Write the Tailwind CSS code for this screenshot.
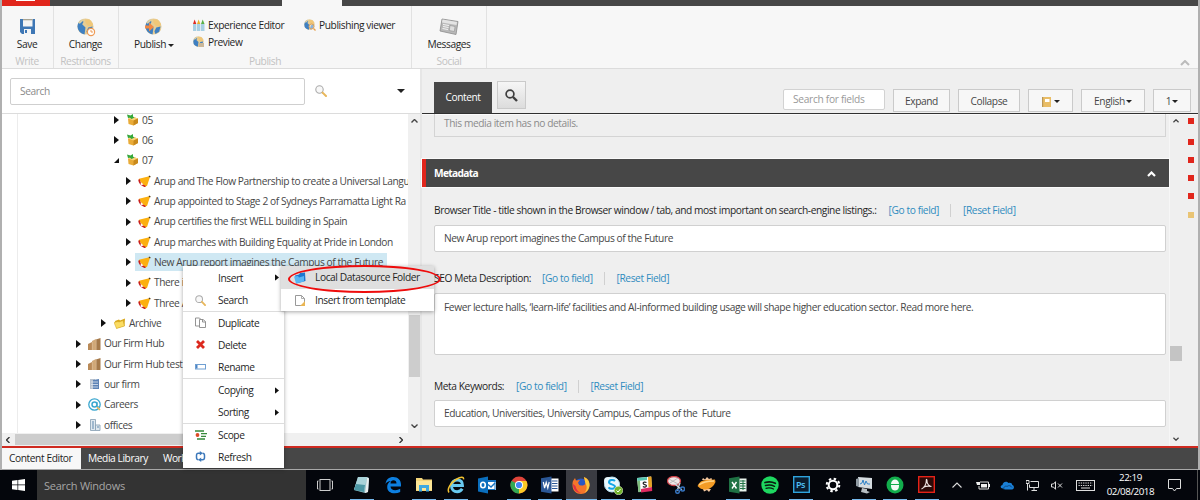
<!DOCTYPE html>
<html lang="en">
<head>
<meta charset="utf-8">
<title>Content Editor</title>
<script src="https://cdn.jsdelivr.net/npm/@tailwindcss/browser@4"></script>
</head>
<body class="w-[1200px] h-[500px] overflow-hidden bg-white">
<svg class="hidden">
  <symbol id="tri" viewBox="0 0 5 8"><path d="M0 0L5 4L0 8Z" fill="#111"/></symbol>
  <symbol id="caret" viewBox="0 0 8 4"><path d="M0 0H8L4 4Z" fill="#222"/></symbol>
  <symbol id="globe" viewBox="0 0 18 18"><circle cx="9" cy="9" r="8.500" fill="#e6cd96"/><path d="M.5 9A8.500 8.500 0 0 1 4 2.500L7 4 5.500 6.500 9 10l-1 7.400A8.500 8.500 0 0 1 .5 9z" fill="#3f80c2"/><path d="M8.500 1.500l5 0 3.500 5-2 3-4-1.500-2-3z" fill="#f0c778"/><path d="M12 10l4.500-1-1.500 5.500-4 2.500-1-3z" fill="#3f80c2"/><path d="M1 5l2.500-3L7 1 5.500 4 3 6z" fill="#d9cfa9"/></symbol>
  <symbol id="mag" viewBox="0 0 12 12"><circle cx="4.500" cy="4.500" r="3.700" fill="#f8f8f8" stroke="#aaa" stroke-width="1.100"/><path d="M7.600 7.600L11 11" stroke="#e8b75c" stroke-width="2" stroke-linecap="round"/></symbol>
  <symbol id="box" viewBox="0 0 12 12"><path d="M1 4.500L6.500 3 11 4.500V9L6.500 11.500 1.500 10z" fill="#e9ab38"/><path d="M1 4.500L6.500 6.500 11 4.500 6.500 3z" fill="#f7d27c"/><path d="M6.500 6.500L11 4.500V9L6.500 11.500z" fill="#c98a1c"/><path d="M0 .5l3.500 1L6 0v2.500l1.500 1-3 1.500L3 3.800 1 4z" fill="#35a83a"/></symbol>
  <symbol id="horn" viewBox="0 0 13 12"><path d="M12.300 1L9 11 6.500 11.500 .8 5.500 1 3.800z" fill="#fcb010"/><path d="M1.200 5.200Q1.500 9.500 6.800 11.200" stroke="#c81e1e" stroke-width="1.700" stroke-linecap="round" fill="#fff"/><path d="M2.800 8.300L4.500 9.900" stroke="#fff" stroke-width="1.600"/><path d="M11 .5l1.600.8-.5 1.300-1.400-.8z" fill="#4d3b22"/></symbol>
  <symbol id="bld" viewBox="0 0 13 12"><path d="M0 6L4 4V12H0z" fill="#b98a58"/><path d="M4 3L8 1V12H4z" fill="#d0a878"/><path d="M8 1.500L12.500 0V12H8z" fill="#a57a4b"/><path d="M4.300 4v8M8.300 2v10" stroke="#e5cba8" stroke-width=".5"/></symbol>
  <symbol id="fold" viewBox="0 0 12 11"><path d="M1 3L5 1.500 6 2.500 11 .5 10.500 8 2.500 10.500z" fill="#d9a719"/><path d="M0 4.500L4 3.500 5 4 9 2.500 10.500 8 2.500 10.500z" fill="#fbdc62" stroke="#cda01f" stroke-width=".5"/></symbol>
</svg>
<div class="relative flex h-[500px] w-[1200px] flex-col bg-[#efefef] font-['Open_Sans',sans-serif] text-[10.2px] leading-none tracking-[-0.41px] text-[#1f1f1f]">

  <!-- application window -->
  <div class="flex h-[470px] flex-col border-r-2 border-l-2 border-[#b0b0b0]">
    <!-- top strip -->
    <div class="flex h-[6px] shrink-0 bg-[#f7f7f7]">
      <div class="flex w-[48px] justify-center bg-[#e1261c] pr-0.5"><div class="h-[1px] w-[19px] bg-white"></div></div>
      <div class="w-[232px] bg-[#474747]"></div>
      <div class="w-[60px]"></div>
      <div class="flex-1 bg-[#474747]"></div>
    </div>

    <!-- ribbon -->
    <div class="flex h-[63px] shrink-0 border-b border-[#dcdcdc] bg-[#f7f7f7]">
      <div class="flex w-[52px] flex-col items-center border-r border-[#e2e2e2] pt-[13px] pr-px">
        <svg class="h-[15px] w-[15px]" viewBox="0 0 15 15"><path d="M0 0H15V15H2L0 13z" fill="#3e77b5"/><rect x="3" y="0" width="9.500" height="7.500" fill="#f4f4f4"/><rect x="3" y="0" width="9.500" height="1.300" fill="#a8a391"/><rect x="4" y="10" width="7" height="5" fill="#f4f4f4"/><rect x="5" y="11" width="2" height="3" fill="#3e77b5"/></svg>
        <span class="mt-[5px]">Save</span><span class="mt-[7px] text-[#c2c2c2]">Write</span>
      </div>
      <div class="flex w-[65px] flex-col items-center border-r border-[#e2e2e2] pt-[12px] pr-px">
        <svg class="h-[18px] w-[18px] overflow-visible" viewBox="0 0 18 18"><use href="#globe" width="17" height="17"/><circle cx="14" cy="14" r="3.600" fill="#fff" stroke="#ee9a55" stroke-width="1.200"/><path d="M14 12v2h2" stroke="#ee9a55" fill="none"/></svg>
        <span class="mt-[3px]">Change</span><span class="mt-[7px] text-[#c2c2c2]">Restrictions</span>
      </div>
      <div class="flex w-[293px] flex-col border-r border-[#e2e2e2]">
        <div class="flex h-[50px]">
          <div class="flex w-[69px] flex-col items-center pt-[12px]">
            <svg class="h-[18px] w-[18px]" viewBox="0 0 18 18"><use href="#globe" width="17" height="17"/><path d="M0 7.500h4V4.500l5 4.500-5 4.500v-3H0z" fill="#f08a45"/></svg>
            <span class="mt-[3px] flex items-center gap-[2px] pl-px">Publish<svg class="mt-[2px] h-[3px] w-[6px]"><use href="#caret" width="6" height="3"/></svg></span>
          </div>
          <div class="flex w-[112px] flex-col gap-[5px] pt-[13px] pl-[5px]">
            <div class="flex h-3 items-center gap-[3px] whitespace-nowrap"><svg class="h-3 w-3" viewBox="0 0 12 12"><path d="M0 5h3.300v7H0zM4 5h3.300v7H4zM8 5h3.500v7H8z" fill="#a7cfe3"/><path d="M0 5l1.600-4.500L3.300 5z" fill="#e02a20"/><path d="M4 5l1.600-4.500L7.300 5z" fill="#e8b02a"/><path d="M8 5l1.700-4.500L11.500 5z" fill="#58b047"/></svg>Experience Editor</div>
            <div class="flex h-3 items-center gap-[3px]"><svg class="h-3 w-3" viewBox="0 0 12 12"><use href="#globe" width="11" height="11"/><path d="M5.500 7h5.500V11H5.500z" fill="#cbb899"/></svg>Preview</div>
          </div>
          <div class="mt-[13px] flex h-3 items-center gap-[3px] pl-[4px] whitespace-nowrap"><svg class="h-3 w-3" viewBox="0 0 12 12"><use href="#globe" width="11" height="11"/><circle cx="7.500" cy="7.500" r="2.500" fill="#fff6" stroke="#d9a05c"/><path d="M9.500 9.500l2 2" stroke="#e8a04a" stroke-width="1.300"/></svg>Publishing viewer</div>
        </div>
        <span class="text-center text-[#c2c2c2]">Publish</span>
      </div>
      <div class="flex w-[75px] flex-col items-center border-r border-[#e2e2e2] pt-[12px]">
        <svg class="h-[18px] w-[20px]" viewBox="0 0 20 18"><path d="M3 1L19 3.500 17 16.500 1 13z" fill="#b9b9b9" stroke="#8b8b8b" stroke-width=".8"/><path d="M3.500 1.500L18 4 17.500 7 3 4.500z" fill="#e4e4e4"/><path d="M4 6.500L10 7.500M4 8.500l5.500 1M3.500 10.500l5.500 1" stroke="#f4f4f4"/><path d="M11 7.500l5 1-.7 5-5-1z" fill="#dedede" stroke="#888" stroke-width=".5"/></svg>
        <span class="mt-[3px]">Messages</span><span class="mt-[7px] text-[#c2c2c2]">Social</span>
      </div>
      <div class="flex flex-1 items-end justify-end pr-[8px] pb-[2px]"><svg class="h-[6px] w-[10px]" viewBox="0 0 10 6" fill="none"><path d="M1 5l4-4 4 4" stroke="#bbb" stroke-width="2"/></svg></div>
    </div>

    <!-- body -->
    <div class="flex h-[377px] shrink-0">
      <!-- content tree -->
      <div class="flex w-[418px] flex-col bg-white">
        <div class="flex h-[45px] items-start border-b border-[#dcdcdc] pt-[9px] pl-[8px]">
          <div class="flex h-[27px] w-[295px] items-center rounded-[2px] border border-[#cfcfcf] pl-[9px] text-[#8a8a8a]">Search</div>
          <svg class="mt-[7px] ml-[10px] h-3 w-3"><use href="#mag"/></svg>
          <svg class="mt-[11px] ml-[70px] h-1 w-2"><use href="#caret"/></svg>
        </div>
        <div class="flex h-[319px]">
          <div class="w-[16px] shrink-0 border-r border-[#ececec]"></div>
          <div class="w-[390px] overflow-hidden text-[#474747]">
            <div class="-mt-[4.400px] flex w-max flex-col whitespace-nowrap *:flex *:h-[20.35px] *:shrink-0 *:items-center">
              <div class="pl-[96px]"><svg class="mr-[8px] h-2 w-[5px] shrink-0"><use href="#tri"/></svg><svg class="mr-[3px] h-3 w-[12px] shrink-0"><use href="#box"/></svg>05</div>
              <div class="pl-[96px]"><svg class="mr-[8px] h-2 w-[5px] shrink-0"><use href="#tri"/></svg><svg class="mr-[3px] h-3 w-[12px] shrink-0"><use href="#box"/></svg>06</div>
              <div class="pl-[96px]"><svg class="mr-[8px] h-[5px] w-[5px] shrink-0" viewBox="0 0 5 5"><path d="M5 0V5H0z" fill="#111"/></svg><svg class="mr-[3px] h-3 w-[12px] shrink-0"><use href="#box"/></svg>07</div>
              <div class="pl-[108px]"><svg class="mr-[7px] h-2 w-[5px] shrink-0"><use href="#tri"/></svg><svg class="mr-[3px] h-3 w-[13px] shrink-0"><use href="#horn"/></svg>Arup and The Flow Partnership to create a Universal Langu</div>
              <div class="pl-[108px]"><svg class="mr-[7px] h-2 w-[5px] shrink-0"><use href="#tri"/></svg><svg class="mr-[3px] h-3 w-[13px] shrink-0"><use href="#horn"/></svg>Arup appointed to Stage 2 of Sydneys Parramatta Light Ra</div>
              <div class="pl-[108px]"><svg class="mr-[7px] h-2 w-[5px] shrink-0"><use href="#tri"/></svg><svg class="mr-[3px] h-3 w-[13px] shrink-0"><use href="#horn"/></svg>Arup certifies the first WELL building in Spain</div>
              <div class="pl-[108px]"><svg class="mr-[7px] h-2 w-[5px] shrink-0"><use href="#tri"/></svg><svg class="mr-[3px] h-3 w-[13px] shrink-0"><use href="#horn"/></svg>Arup marches with Building Equality at Pride in London</div>
              <div class="pl-[108px]"><svg class="mr-[4px] h-2 w-[5px] shrink-0"><use href="#tri"/></svg><div class="flex h-[18px] w-[252px] items-center bg-[#cfe8f3] pl-[3px]"><svg class="mr-[3px] h-3 w-[13px] shrink-0"><use href="#horn"/></svg>New Arup report imagines the Campus of the Future</div></div>
              <div class="pl-[108px]"><svg class="mr-[7px] h-2 w-[5px] shrink-0"><use href="#tri"/></svg><svg class="mr-[3px] h-3 w-[13px] shrink-0"><use href="#horn"/></svg>There is</div>
              <div class="pl-[108px]"><svg class="mr-[7px] h-2 w-[5px] shrink-0"><use href="#tri"/></svg><svg class="mr-[3px] h-3 w-[13px] shrink-0"><use href="#horn"/></svg>Three A</div>
              <div class="pl-[83px]"><svg class="mr-[8px] h-2 w-[5px] shrink-0"><use href="#tri"/></svg><svg class="mr-[3px] h-[11px] w-[12px] shrink-0"><use href="#fold"/></svg>Archive</div>
              <div class="pl-[58px]"><svg class="mr-[7px] h-2 w-[5px] shrink-0"><use href="#tri"/></svg><svg class="mr-[3px] h-3 w-[13px] shrink-0"><use href="#bld"/></svg>Our Firm Hub</div>
              <div class="pl-[58px]"><svg class="mr-[7px] h-2 w-[5px] shrink-0"><use href="#tri"/></svg><svg class="mr-[3px] h-3 w-[13px] shrink-0"><use href="#bld"/></svg>Our Firm Hub test</div>
              <div class="pl-[58px]"><svg class="mr-[7px] h-2 w-[5px] shrink-0"><use href="#tri"/></svg><svg class="mr-[3px] h-3 w-[13px] shrink-0" viewBox="0 0 13 12"><path d="M2 1h5v10H2z" fill="#b9c3cf"/><path d="M5 2l6-1v10H5z" fill="#5c82b5"/><path d="M3 4h7M3 6.500h7M3 9h7" stroke="#dfe8f2" stroke-width=".8"/></svg>our firm</div>
              <div class="pl-[58px]"><svg class="mr-[7px] h-2 w-[5px] shrink-0"><use href="#tri"/></svg><svg class="mr-[3px] h-[13px] w-[13px] shrink-0" viewBox="0 0 13 13" fill="none"><circle cx="6.500" cy="6.500" r="5.700" stroke="#3ba7cf" stroke-width="1.300"/><circle cx="6.500" cy="6.500" r="2.500" stroke="#3ba7cf" stroke-width="1.500"/><path d="M9 4v4q1 2 2.500 0" stroke="#3ba7cf"/><path d="M9 9l3 3" stroke="#e8b75c" stroke-width="1.600"/></svg>Careers</div>
              <div class="pl-[58px]"><svg class="mr-[7px] h-2 w-[5px] shrink-0"><use href="#tri"/></svg><svg class="mr-[3px] h-3 w-[13px] shrink-0" viewBox="0 0 13 12"><path d="M2.500.5h5v11h-5zM7.500 6h4.500v5.500H7.500z" fill="#dfe8ef" stroke="#8fa6b8" stroke-width=".9"/><path d="M4 3h2M4 5h2M4 7h2M4 9h2M9 8h2" stroke="#5f88ad"/></svg>offices</div>
            </div>
          </div>
          <div class="flex w-[12px] flex-col items-center justify-between bg-[#f0f0f0] py-[5px]">
            <svg class="h-[4px] w-[7px]" viewBox="0 0 7 4" fill="none"><path d="M.5 3.500l3-3 3 3" stroke="#444" stroke-width="1.400"/></svg>
            <div class="mt-[144px] h-[62px] w-[11px] bg-[#cdcdcd]"></div>
            <svg class="h-[4px] w-[7px]" viewBox="0 0 7 4" fill="none"><path d="M.5.5l3 3 3-3" stroke="#444" stroke-width="1.400"/></svg>
          </div>
        </div>
        <div class="flex h-[13px] items-center bg-[#f0f0f0]">
          <svg class="ml-[4px] h-[6px] w-[4px]" viewBox="0 0 4 6" fill="none"><path d="M3.500 0l-3 3 3 3" stroke="#333" stroke-width="1.300"/></svg>
          <div class="ml-[5px] h-[11px] w-[230px] bg-[#cdcdcd]"></div>
          <svg class="ml-[154px] h-[6px] w-[4px]" viewBox="0 0 4 6" fill="none"><path d="M.5 0l3 3-3 3" stroke="#333" stroke-width="1.300"/></svg>
        </div>
      </div>

      <!-- field editor -->
      <div class="flex flex-1 flex-col border-l-2 border-[#e6e6e6] bg-[#efefef]">
        <div class="flex h-[45px] items-start border-b border-[#303030] pl-[12px] shadow-[0_1px_0_#fafafa]">
          <div class="mt-[13px] flex h-[31px] w-[58px] items-center justify-center bg-[#474747] text-white">Content</div>
          <div class="mt-[12px] ml-[5px] flex h-[28px] w-[29px] items-center justify-center border border-[#cacaca] bg-linear-to-b from-[#f6f6f6] to-[#dcdcdc]"><svg class="h-[13px] w-[13px]" viewBox="0 0 13 13" fill="none" stroke="#3f3f3f"><circle cx="5" cy="5" r="3.900" stroke-width="1.700"/><path d="M8 8l4 4" stroke-width="2.400"/></svg></div>
          <div class="mt-[20px] ml-[257px] flex h-[21px] w-[102px] items-center rounded-[2px] border border-[#d2d2d2] bg-white pl-[9px] tracking-[-0.3px] text-[#999]">Search for fields</div>
          <div class="mt-[20px] ml-[8px] flex h-[23px] gap-[8px] text-[#474747] *:flex *:items-center *:justify-center *:border *:border-[#cacaca] *:bg-[#f7f7f7] *:pt-px">
            <div class="w-[57px]">Expand</div>
            <div class="w-[62px]">Collapse</div>
            <div class="w-[45px] gap-[3px]"><svg class="mt-px h-[10px] w-[9px]" viewBox="0 0 9 10"><path d="M0 0h9v10H0z" fill="#e9bd66"/><path d="M0 0h1.200v10H0z" fill="#b99656"/><path d="M3 2h4.500v3H3z" fill="#fff"/></svg><svg class="h-[3px] w-[6px]"><use href="#caret" width="6" height="3"/></svg></div>
            <div class="w-[64px] gap-[1px]">English<svg class="h-[3px] w-[6px]"><use href="#caret" width="6" height="3"/></svg></div>
            <div class="w-[38px] gap-[1px]">1<svg class="h-[3px] w-[6px]"><use href="#caret" width="6" height="3"/></svg></div>
          </div>
        </div>
        <div class="flex h-[332px]">
          <div class="flex w-[748px] flex-col border-r border-[#f6f6f6]">
            <div class="ml-[12px] flex h-[23px] w-[732px] items-center border border-t-0 border-[#d4d4d4] pb-[3px] pl-[9px] text-[#8b8b8b]">This media item has no details.</div>
            <div class="mt-[22px] flex h-[28px] items-center justify-between border-l-4 border-[#e1261c] bg-[#474747] pt-px pr-[13px] pl-[8px] font-bold tracking-[-0.68px] text-white shadow-[0_0_0_1px_#fafafa]">Metadata<svg class="h-[6px] w-[9px]" viewBox="0 0 9 6" fill="none"><path d="M1 5l3.500-3.500L8 5" stroke="#fff" stroke-width="2.200"/></svg></div>
            <div class="mt-[17px] ml-[12px] flex h-[13px] w-[732px] items-center whitespace-nowrap">Browser Title - title shown in the Browser window / tab, and most important on search-engine listings.:<span class="ml-[12px] text-[#2f8cbf]">[Go to field]</span><span class="ml-[11px] h-[13px] w-px bg-[#d0d0d0]"></span><span class="ml-[12px] text-[#2f8cbf]">[Reset Field]</span></div>
            <div class="mt-[8px] ml-[12px] flex h-[27px] w-[732px] items-center rounded-[2px] border border-[#d0d0d0] bg-white pl-[9px] text-[#474747]">New Arup report imagines the Campus of the Future</div>
            <div class="mt-[20px] ml-[12px] flex h-[13px] items-center">SEO Meta Description:<span class="ml-[11px] text-[#2f8cbf]">[Go to field]</span><span class="ml-[11px] h-[13px] w-px bg-[#d0d0d0]"></span><span class="ml-[12px] text-[#2f8cbf]">[Reset Field]</span></div>
            <div class="mt-[8px] ml-[12px] h-[62px] w-[732px] rounded-[2px] border border-[#d0d0d0] bg-white pt-[8px] pl-[9px] text-[#474747]">Fewer lecture halls, ‘learn-life’ facilities and AI-informed building usage will shape higher education sector. Read more here.</div>
            <div class="mt-[25px] ml-[12px] flex h-[13px] items-center">Meta Keywords:<span class="ml-[12px] text-[#2f8cbf]">[Go to field]</span><span class="ml-[11px] h-[13px] w-px bg-[#d0d0d0]"></span><span class="ml-[12px] text-[#2f8cbf]">[Reset Field]</span></div>
            <div class="mt-[7px] ml-[12px] flex h-[27px] w-[732px] items-center rounded-[2px] border border-[#d0d0d0] bg-white pl-[9px] whitespace-pre text-[#474747]">Education, Universities, University Campus, Campus of the  Future</div>
          </div>
          <div class="flex w-[12px] flex-col items-center pt-[5px]">
            <svg class="h-[4px] w-[6px]" viewBox="0 0 7 4" fill="none"><path d="M.5 3.500l3-3 3 3" stroke="#444" stroke-width="1.400"/></svg>
            <div class="mt-[223px] h-[15px] w-[12px] bg-[#c4c4c4]"></div>
            <svg class="mt-[76px] h-[4px] w-[6px]" viewBox="0 0 7 4" fill="none"><path d="M.5.500l3 3 3-3" stroke="#444" stroke-width="1.400"/></svg>
          </div>
          <div class="flex flex-col pt-[4px] pl-[6px] *:h-[6px] *:w-[6px]">
            <div class="bg-[#e1261c]"></div>
            <div class="mt-[15px] bg-[#e1261c]"></div>
            <div class="mt-[12px] bg-[#e1261c]"></div>
            <div class="mt-[12px] bg-[#e1261c]"></div>
            <div class="mt-[12px] bg-[#e1261c]"></div>
            <div class="mt-[13px] bg-[#e9c474]"></div>
          </div>
        </div>
      </div>
    </div>

    <!-- editor tabs -->
    <div class="flex h-[24px] shrink-0 items-stretch border-t-2 border-b border-t-[#cf2a20] border-b-[#a8a8a8] bg-[#474747] text-white">
      <div class="flex w-[79px] items-center bg-[#f7f7f7] pl-[7px] text-[#1f1f1f]">Content Editor</div>
      <div class="flex items-center pl-[7px]">Media Library</div>
      <div class="flex items-center pl-[15px]">Workbox</div>
    </div>
  </div>

  <!-- taskbar -->
  <div class="flex h-[30px] items-stretch bg-[#04060c] text-white">
    <div class="flex w-[37px] items-center justify-center"><svg class="h-[12px] w-[13px]" viewBox="0 0 13 12"><path d="M0 1.700L5.500 1v4.600H0zM6.200.9L13 0v5.600H6.200zM0 6.300h5.500v4.600L0 10.200zM6.200 6.300H13V12l-6.800-.9z" fill="#fff"/></svg></div>
    <div class="flex w-[269px] items-center bg-[#333] pt-px pl-[7px] text-[11px] tracking-[-0.25px] text-[#a6a6a6]">Search Windows</div>
    <div class="flex w-[40px] items-center pl-[11px]"><svg class="h-[12px] w-[16px]" viewBox="0 0 16 12" fill="none" stroke="#ccc"><rect x="3" y=".5" width="10" height="11"/><path d="M1.500 2H.5v8h1M14.500 2h1v8h-1"/></svg></div>
    <div class="flex *:flex *:w-[31.4px] *:flex-col *:items-center *:justify-between *:pt-[6px]">
      <div><svg class="h-[18px] w-[18px]" viewBox="0 0 18 18"><path d="M5 1h9l2 1-1 14-3 1L1 14z" fill="#8fb9c2"/><path d="M5 1h9l-3 15L1 13.500z" fill="#a9d3da"/><path d="M3 8l9 1-1 7-10-2z" fill="#4c97a5"/><path d="M14 1.500l2 1-1 13.500-3 1z" fill="#e9eef0"/></svg><i class="h-[1px] w-[24px] bg-[#76b9ed]"></i></div>
      <div><svg class="h-[18px] w-[18px]" viewBox="0 0 18 18"><path d="M1.500 8C2 3.500 5 1 9.300 1 14 1 17 4.200 17 8.500V10.500H6.500c.2 2.600 2.200 3.700 4.700 3.700 2 0 3.500-.5 5-1.400v3.300c-1.700.8-3.500 1.200-5.500 1.200-4.500 0-7.500-2.300-7.500-6.300 0-2.700 1.300-4.700 3.800-6C4 5.200 2.500 6.300 1.500 8zM6.500 7.500h6C12.500 5.300 11.300 4.300 9.500 4.300S6.700 5.500 6.500 7.500z" fill="#0d7fe0"/></svg></div>
      <div><svg class="h-[18px] w-[18px]" viewBox="0 0 18 18"><path d="M1 2h6l1 1.500h9V15H1z" fill="#f5d67b"/><path d="M1 5h16v9H1z" fill="#fde697"/><path d="M4 9h10v6.500h-3V12H7v3.500H4z" fill="#3fa9e0"/></svg><i class="h-[1px] w-[24px] bg-[#76b9ed]"></i></div>
      <div><svg class="h-[18px] w-[18px]" viewBox="0 0 18 18" fill="none"><path d="M4.500 9.500H15.500C15.500 6 13.500 4 10.300 4S4.500 6.200 4.500 10c0 3.500 2.300 5.700 5.700 5.700 2.300 0 4-1 5-2.900" stroke="#68c9f0" stroke-width="2.900"/><path d="M2 16.500C-.5 13 4 6.500 9 3.500s8-3 7.500-.2" stroke="#f2c230" stroke-width="1.500"/></svg><i class="h-[1px] w-[24px] bg-[#76b9ed]"></i></div>
      <div><svg class="h-[18px] w-[18px]" viewBox="0 0 18 18"><path d="M8 4h10v10H8z" fill="#fff"/><path d="M8 4h10v2H8zM16.500 4h1v10H8v-1h8.500z" fill="#1474c4"/><path d="M10 8.500l3 2.500 4-4" stroke="#1474c4" stroke-width="1.400" fill="none"/><path d="M0 2.500L10 .5v17L0 15.500z" fill="#0a6ebd"/><ellipse cx="5" cy="9" rx="2.300" ry="2.800" fill="none" stroke="#fff" stroke-width="1.600"/></svg></div>
      <div><svg class="h-[18px] w-[18px]" viewBox="0 0 18 18"><circle cx="9" cy="9" r="8.500" fill="#e0443a"/><path d="M9 9L1.600 4.700A8.500 8.500 0 0 0 9 17.500l4-6.500z" fill="#33a852"/><path d="M9 9l0 8.500A8.500 8.500 0 0 0 16.400 5H9z" fill="#fbc926"/><circle cx="9" cy="9" r="4" fill="#fff"/><circle cx="9" cy="9" r="3.100" fill="#4285f4"/></svg><i class="h-[1px] w-[24px] bg-[#76b9ed]"></i></div>
      <div><svg class="h-[18px] w-[18px]" viewBox="0 0 18 18"><path d="M9 2.500h8.500v13H9z" fill="#fff"/><path d="M11 5h5.500M11 7.500h5.500M11 10h5.500M11 12.500h5.500" stroke="#2b5797"/><path d="M0 2.200L10.500.5v17L0 15.800z" fill="#2b5797"/><path d="M2.300 6l1.300 6L5.200 6.500 6.800 12 8.200 6" stroke="#fff" stroke-width="1.200" fill="none"/></svg><i class="h-[1px] w-[24px] bg-[#76b9ed]"></i></div>
      <div class="bg-[#3a3b42]"><svg class="h-[18px] w-[18px]" viewBox="0 0 18 18"><circle cx="9" cy="9.500" r="7" fill="#2b57c4"/><path d="M1 5L3 2l1 2.500L8 4 6 7l3 2c2 1 4 0 4.500-1.500L12 1c4 1.500 5.800 5 5.500 8.500C17 14.500 13.500 18 9 18S.5 14.500.5 9.500C.5 7.500.5 6.500 1 5z" fill="#f5752a"/><path d="M12 1c4 1.500 5.800 5 5.500 8.500-.2 3-2 6-5 7.500 3-4 2.500-7 1-9.500z" fill="#fdc83c"/><path d="M1 8c0 5 3 9 8 9-3-1-5-4-5.500-7z" fill="#e02f45"/><circle cx="9" cy="7" r="2.500" fill="#2b57c4"/></svg><i class="h-[1px] w-[31px] bg-[#76b9ed]"></i></div>
      <div><svg class="h-[19px] w-[20px]" viewBox="0 0 20 19"><circle cx="9" cy="8.500" r="7.500" fill="#e9f7fd" stroke="#b9e2f5"/><circle cx="5" cy="5" r="4" fill="#e9f7fd"/><path d="M12 5C10.500 3.500 6 3.700 6 6.300c0 2.400 6 1.700 6 4.400 0 2.600-5 2.600-6.500.6" fill="none" stroke="#12a5e6" stroke-width="2"/><circle cx="15.500" cy="14.500" r="4.300" fill="#73b42c" stroke="#e8f4dc" stroke-width=".6"/><path d="M13.500 14.500l1.500 1.500 2.500-3" stroke="#fff" fill="none"/></svg><i class="h-[1px] w-[24px] bg-[#76b9ed]"></i></div>
      <div><svg class="h-[17px] w-[17px]" viewBox="0 0 17 17"><path d="M1 2L15 .5 16 14 2.500 16z" fill="#fff"/><path d="M1 2L11 1v3L1.500 5z" fill="#57c5b0"/><path d="M12 1l3.500-.5L16 11l-3.500.5z" fill="#e6a323"/><path d="M5 13l11-2 .2 4L5 16.500z" fill="#e02a62"/><path d="M1.300 5L4 4.500 4.500 16l-2 .3z" fill="#7ebd7d"/><path d="M10.500 6.500C9 5.700 7 6 7.200 7.500c.2 1.300 3.200.8 3.200 2.300 0 1.500-2.300 1.700-3.500.7" fill="none" stroke="#222" stroke-width="1.300"/></svg><i class="h-[1px] w-[24px] bg-[#76b9ed]"></i></div>
      <div><svg class="h-[18px] w-[18px]" viewBox="0 0 18 18"><ellipse cx="7" cy="5" rx="6.500" ry="4.500" fill="#f0e6e6" stroke="#ce4047" stroke-width="1.300"/><path d="M2 3l9 5M3 7l8-5" stroke="#bbb"/><path d="M8 8l7 6M13 7l-3 8" stroke="#ccd5dd" stroke-width="1.300"/><circle cx="15.500" cy="13" r="2" fill="none" stroke="#3673bd" stroke-width="1.500"/><circle cx="10.500" cy="15.500" r="1.800" fill="none" stroke="#3673bd" stroke-width="1.500"/></svg></div>
      <div><svg class="h-[18px] w-[19px]" viewBox="0 0 19 18"><path d="M5 4l1-2 2 1.500L10 1l2 2 2.500-1 .5 2.500M6 13l1 2.500 3-1.500 2 2 2-3" fill="#f6c9a0"/><path d="M.5 10Q3 4 9 4L18 3.500 18.500 6Q16 12.500 9 13.500 4 14 .5 10z" fill="#f39b25"/><path d="M2 9q5-4 15-4" stroke="#ffd487" stroke-width="1.300" fill="none"/></svg></div>
      <div><svg class="h-[18px] w-[18px]" viewBox="0 0 18 18"><path d="M9 2.500h8.500v13H9z" fill="#e8f2ec"/><path d="M11 5h5.500M11 7.500h5.500M11 10h5.500M11 12.500h5.500M14 4v10" stroke="#217346"/><path d="M0 2.200L10.500.5v17L0 15.800z" fill="#1f7244"/><path d="M3 6l4.500 6.500M7.500 6L3 12.500" stroke="#fff" stroke-width="1.400"/></svg><i class="h-[1px] w-[24px] bg-[#76b9ed]"></i></div>
      <div><svg class="h-[18px] w-[18px]" viewBox="0 0 18 18" fill="none" stroke="#0a1c10" stroke-linecap="round"><circle cx="9" cy="9" r="8.700" fill="#1ed760" stroke="none"/><path d="M4 6.500q5.500-1.700 10.300.8" stroke-width="1.800"/><path d="M4.500 9.500q5-1.300 9 .8" stroke-width="1.500"/><path d="M5 12.300q4-1 7.500.7" stroke-width="1.200"/></svg></div>
      <div><svg class="h-[17px] w-[17px]" viewBox="0 0 17 17"><rect x=".7" y=".7" width="15.600" height="15.600" fill="#0a1d2e" stroke="#2fa3dd" stroke-width="1.400"/><text x="3" y="12" font-size="9" font-weight="600" fill="#4fc0f5">Ps</text></svg><i class="h-[1px] w-[24px] bg-[#76b9ed]"></i></div>
      <div><svg class="h-[18px] w-[16px]" viewBox="0 0 16 18" fill="none" stroke="#fff"><circle cx="8" cy="9" r="4.300" stroke-width="2"/><circle cx="8" cy="9" r="6.300" stroke-width="2" stroke-dasharray="2.470 2.470"/></svg></div>
      <div><svg class="h-[18px] w-[18px]" viewBox="0 0 18 18"><path d="M3 1l14 1v11l-14-2z" fill="#d4dbe0"/><path d="M1 3l3-1 0 9-3-1z" fill="#8f9aa2"/><path d="M5 8l2-1 1-3 1.500 5L11 5l1.500 3H15" stroke="#2e82c9" fill="none"/><path d="M7 12l5 1v2l3 1-3 1.500-6-1.500z" fill="#b8bec2"/></svg><i class="h-[1px] w-[24px] bg-[#76b9ed]"></i></div>
      <div><svg class="h-[18px] w-[18px]" viewBox="0 0 18 18"><circle cx="9" cy="9" r="8.500" fill="#12ad4c"/><path d="M5 8c0-6 8-6 8 0v2c0 6-8 6-8 0z" fill="#f3faf5"/><path d="M4 8.500h10" stroke="#12ad4c" stroke-width="1"/></svg><i class="h-[1px] w-[24px] bg-[#76b9ed]"></i></div>
      <div><svg class="h-[17px] w-[17px]" viewBox="0 0 17 17"><rect x=".7" y=".7" width="15.600" height="15.600" fill="#2b0a08" stroke="#e52217" stroke-width="1.400"/><path d="M3.500 13C6 12 8.500 8 8.300 4.500 8 3 9.300 3 9 5c-.3 2.500 2 5 4.500 5.500M5 11.500q4-2 8.500-1" stroke="#f0e4e2" fill="none" stroke-width="1.100"/></svg><i class="h-[1px] w-[24px] bg-[#76b9ed]"></i></div>
    </div>
    <div class="flex flex-1 items-center pl-[10px]">
      <svg class="h-[6px] w-[10px]" viewBox="0 0 10 6" fill="none"><path d="M.5 5.500L5 1l4.500 4.500" stroke="#ddd" stroke-width="1.100"/></svg>
      <svg class="ml-[14px] h-[10px] w-[14px]" viewBox="0 0 14 10"><path d="M4 2h8.500v7H3V6" fill="none" stroke="#ddd"/><path d="M5 4h6v3.500H5zM12.500 4H14v3h-1.500zM0 2h4v3H1z" fill="#eee"/></svg>
      <svg class="ml-[10px] h-[9px] w-[14px]" viewBox="0 0 14 9"><path d="M3 7.500C0 7.500 0 4.500 2.500 4 2.500 1 6.500-.5 8.500 2c2-1 4 .5 3.700 2 2.400.5 2.300 4-.2 4.500H5z" fill="#1a7fd6"/><path d="M4 8.500C3 6 5.500 4.500 7 5.500c1.500-1.500 4-1 5 1" fill="none" stroke="#0b4a86"/></svg>
      <svg class="ml-[12px] h-[11px] w-[13px]" viewBox="0 0 13 11" fill="none" stroke="#ddd"><path d="M4.500 1.500h8v6h-9V4.500M0 .5h3v3H0zM1.500 3.500v7M8 7.500v2.500M5.500 10.500H11"/></svg>
      <svg class="ml-[12px] h-[9px] w-[12px]" viewBox="0 0 12 9" fill="none" stroke="#ddd"><path d="M.5 3h2l2-2.300v7.600L2.500 6h-2zM7 2.500l4 4M11 2.500l-4 4"/></svg>
      <svg class="ml-[13px] h-[11px] w-[19px]" viewBox="0 0 19 11" fill="none" stroke="#ddd"><rect x=".5" y=".5" width="18" height="10"/><path d="M2.500 3h14M2.500 5.500h14" stroke-dasharray="1.300 1"/><path d="M5 8h9"/></svg>
      <div class="ml-[8px] flex w-[54px] flex-col items-center gap-[4px] pb-px text-[9.8px] tracking-[-0.45px] whitespace-nowrap"><span>22:19</span><span>02/08/2018</span></div>
      <svg class="ml-[11px] h-[13px] w-[13px]" viewBox="0 0 13 13" fill="none" stroke="#ddd"><path d="M.5.500h12v9H8.500L6.500 12l-2-2.500h-4z"/></svg>
      <div class="ml-[16px] h-full w-px bg-[#555]"></div>
    </div>
  </div>

  <!-- context menu -->
  <div class="absolute top-[266px] left-[183px] flex h-[202px] w-[101px] flex-col bg-white pt-[0.5px] shadow-[0_1px_4px_rgba(0,0,0,0.35)] *:flex *:h-[22.400px] *:shrink-0 *:items-center">
    <div class="pl-[35px]">Insert<svg class="mr-[5px] ml-auto h-[7px] w-[4px]" viewBox="0 0 5 8"><use href="#tri"/></svg></div>
    <div><svg class="mx-[12px] h-[11px] w-[11px]" viewBox="0 0 12 12"><use href="#mag"/></svg>Search</div>
    <div class="border-t border-[#ddd]"><svg class="mx-[12px] h-[11px] w-[11px]" viewBox="0 0 11 11" fill="#fff" stroke="#888" stroke-width=".9"><path d="M.5 1h4l1.500 1.500V9H.5z"/><path d="M4.500 2.500h3.500l2.500 2V10.500h-6z"/><path d="M7.500 2.500v2.500h3" fill="none"/></svg>Duplicate</div>
    <div><svg class="mx-[13px] h-[9px] w-[9px]" viewBox="0 0 9 9"><path d="M1 1l7 7M8 1L1 8" stroke="#dc291e" stroke-width="2.800"/></svg>Delete</div>
    <div><svg class="mx-[12px] h-[6px] w-[11px]" viewBox="0 0 11 6"><rect x=".5" y=".5" width="10" height="4.500" fill="#fff" stroke="#6f9fd2"/><path d="M1 1h1.500v3.500H1z" fill="#4c84c4"/></svg>Rename</div>
    <div class="border-t border-[#ddd] pl-[35px]">Copying<svg class="mr-[5px] ml-auto h-[7px] w-[4px]" viewBox="0 0 5 8"><use href="#tri"/></svg></div>
    <div class="pl-[35px]">Sorting<svg class="mr-[5px] ml-auto h-[7px] w-[4px]" viewBox="0 0 5 8"><use href="#tri"/></svg></div>
    <div class="border-t border-[#ddd]"><svg class="mr-[11px] ml-[12px] h-[10px] w-[12px]" viewBox="0 0 12 10" stroke="#37893b" stroke-width="1.300"><path d="M0 1h9M6 3.700h6M6 6.300h5M2 9h8"/><circle cx="2.500" cy="5" r="1.900" fill="#db4b24" stroke="none"/></svg>Scope</div>
    <div><svg class="mx-[12px] h-[11px] w-[11px]" viewBox="0 0 11 11" fill="none" stroke="#3c78ba" stroke-width="1.500"><path d="M3.500 8.800Q1.500 8.800 1.500 6.500V4.500Q1.500 2.300 3.500 2.300H5M7.500 2.300Q9.500 2.300 9.500 4.500V6.500Q9.500 8.800 7.500 8.800H6"/><path d="M4.800 0l3 2.300-3 2.300zM6.200 6.500L3.200 8.800l3 2.200z" fill="#3c78ba" stroke="none"/></svg>Refresh</div>
  </div>

  <!-- insert submenu -->
  <div class="absolute top-[266px] left-[281px] flex h-[45px] w-[153px] flex-col bg-white shadow-[0_1px_4px_rgba(0,0,0,0.35)] *:flex *:items-center">
    <div class="h-[23px] bg-[#dfdfdf]"><svg class="mr-[9px] ml-[13px] h-[12px] w-[12px]" viewBox="0 0 12 12"><path d="M1 3.500L5 2.500l1-1.500 5-.5L11.500 9 2.500 11.500z" fill="#1d78cf"/><path d="M0 4.500L4 4l1 1.500 5-1.500 0 5.500L2 11.500z" fill="#58b6f5"/></svg>Local Datasource Folder</div>
    <div class="h-[22px]"><svg class="mr-[10px] ml-[14px] h-[11px] w-[10px]" viewBox="0 0 10 11"><path d="M.5.500h6l3 3v7h-9z" fill="#fff" stroke="#999"/><path d="M6.500.5v3h3" fill="none" stroke="#999" stroke-width=".8"/><path d="M10 6v5H5z" fill="#eab654"/></svg>Insert from template</div>
  </div>
  <div class="absolute top-[265px] left-[288px] h-[28px] w-[153px] rounded-[50%] border-2 border-[#ee0c0c]"></div>
</div>
</body>
</html>
